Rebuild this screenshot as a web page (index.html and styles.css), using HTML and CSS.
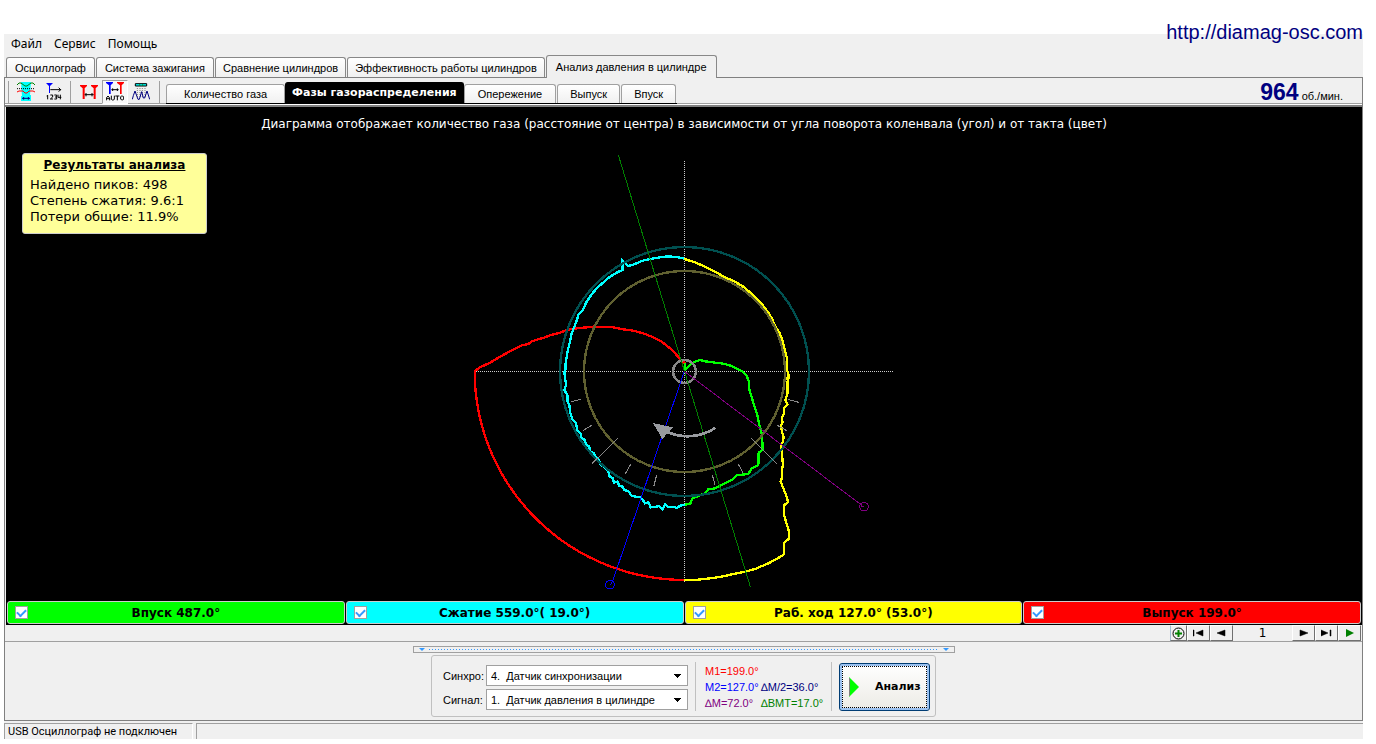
FILE: index.html
```html
<!DOCTYPE html>
<html lang="ru">
<head>
<meta charset="utf-8">
<title>Осциллограф</title>
<link rel="stylesheet" href="styles.css">
</head>
<body>
<div class="window">
  <a class="site-link" href="http://diamag-osc.com">http://diamag-osc.com</a>
  <nav class="menu">
    <button>Файл</button><button>Сервис</button><button>Помощь</button>
  </nav>
  <div class="tabs">
    <button>Осциллограф</button>
    <button>Система зажигания</button>
    <button>Сравнение цилиндров</button>
    <button>Эффективность работы цилиндров</button>
    <button class="active">Анализ давления в цилиндре</button>
  </div>
  <main class="page">
    <div class="toolbar">
      <span class="sep"></span>
      <button class="tool" aria-label="Наложение">
        <svg width="18" height="19" viewBox="0 0 54 57" fill="none" stroke-width="3">
          <path d="M12 0H42L39 39H42V57H12V42H15Z" fill="#0ff"/>
          <path d="M0 9L6 3H12L24 12H30L42 3H48L54 9" stroke="#008000"/>
          <path d="M0 20H54" stroke="#000" stroke-dasharray="3 3"/>
          <path d="M0 30L6 27H18L24 33H30L36 27H48L54 30" stroke="#f00"/>
          <path d="M15 49H39M20 45V53M34 45V53" stroke="#000080"/>
        </svg>
      </button>
      <button class="tool" aria-label="Нумерация">
        <svg width="16" height="17" viewBox="0 0 48 51" fill="none" stroke="#000" stroke-width="3">
          <path d="M0 0H21L12 9V30H9V9Z" fill="#00f" stroke="none"/>
          <path d="M13 20H45M38 14L44 20L38 26"/>
          <path d="M5 36V49M2 39H5M13 36H20V42L13 48H21M25 36H32V48H25M27 42H32M36 35V43H46M43 35V49"/>
        </svg>
      </button>
      <span class="sep"></span>
      <button class="tool" aria-label="Маркеры">
        <svg width="18" height="14" viewBox="0 0 54 42" fill="none" stroke="#000" stroke-width="3">
          <path d="M0 0H21V3L14 10V42H8V10L0 3ZM33 0H54V3L47 10V42H41V10L33 3Z" fill="#f00" stroke="none"/>
          <path d="M14 29H41M18 24V34M36 24V34"/>
        </svg>
      </button>
      <button class="tool pressed" aria-label="Авто">
        <svg width="18" height="19" viewBox="0 0 54 57" fill="none" stroke="#000" stroke-width="3">
          <path d="M0 0H21V3L14 10V36H9V10L0 3Z" fill="#00f" stroke="none"/>
          <path d="M33 0H54V3L47 10V36H42V10L33 3Z" fill="#f00" stroke="none"/>
          <path d="M16 23H38M20 19V27M34 19V27"/>
          <path d="M1 55V48L6 42L11 48V55M1 50H11M16 41V52L19 54H23L25 51V41M28 42H40M34 42V55M44 44L47 42H50L53 45V51L50 54H47L44 51Z"/>
        </svg>
      </button>
      <button class="tool" aria-label="Пики">
        <svg width="18" height="17" viewBox="0 0 54 51" fill="none" stroke-width="3">
          <path d="M10 2H44V9H10Z" fill="#0ff" stroke="#000"/>
          <path d="M23 4V8M32 4V8" stroke="#008000"/>
          <path d="M16 15V45M24 15V45M31 15V45M39 15V45" stroke="#808080" stroke-dasharray="3 3"/>
          <path d="M1 49L4 38L9 24L15 41L18 49H22L29 26L34 45H38L45 24L50 39L53 49" stroke="#000080"/>
        </svg>
      </button>
      <span class="sep"></span>
      <div class="subtabs">
        <button class="wide">Количество газа</button>
        <button class="active">Фазы газораспределения</button>
        <button class="mid">Опережение</button>
        <button>Выпуск</button>
        <button>Впуск</button>
      </div>
      <div class="rpm"><b>964</b><span>об./мин.</span></div>
    </div>

    <section class="scope">
      <p class="caption">Диаграмма отображает количество газа (расстояние от центра) в зависимости от угла поворота коленвала (угол) и от такта (цвет)</p>
      <aside class="results">
        <h2>Результаты анализа</h2>
        <p>Найдено пиков: 498</p>
        <p>Степень сжатия: 9.6:1</p>
        <p>Потери общие: 11.9%</p>
      </aside>
      <svg class="diagram" viewBox="12 0 1320 1320" fill="none" stroke-width="7" shape-rendering="crispEdges">
        <g stroke="#ccc" stroke-width="3" stroke-dasharray="3 3">
          <path d="M42 664.5H1299"/><path d="M673.5 33V1296"/>
        </g>
        <path stroke="#f00" d="M675 664V640L662 628 648 613 630 595 605 575 580 562 550 550 520 542 490 538 460 532 400 530 370 533 335 537 318 541 300 548 270 556 255 562 215 574 205 582 185 586 150 604 120 620 90 638 60 652 44 664A631 626 0 0 0 675 1290"/>
        <path stroke="#0ff" d="M673 326L655 322 628 319 605 321 575 326 548 332 525 342 505 348 497 342 487 332V360L470 368 450 380 430 397 410 415 395 433 380 455 368 480 356 492 350 512 343 530 335 550 330 575 325 595 320 620 316 645 317 655 313 668 315 680 318 705 313 720 322 735 323 755 328 765 330 785 338 810 348 820 352 840 362 850 365 865 375 870 377 882 388 890 390 903 402 910 408 922 418 932 420 943 433 952 445 965 448 978 458 985 462 998 473 995 478 1008 488 1010 492 1020 505 1023 515 1038 543 1042 555 1060 565 1057 572 1072 590 1070 598 1068 607 1078 615 1063 627 1072 638 1070 652 1074 660 1067 675 1064"/>
        <path stroke="#ff0" d="M673 327L705 337 730 348 770 368 795 382 825 395 850 410 870 427 895 452 910 468 928 492 938 510 945 528 958 548 968 572 974 600 981 625V660L987 680 979 686 986 685 982 695 983 728 976 750 982 763 973 772 972 790 965 805 968 818 963 825 966 845 971 860 969 875 962 885 965 905 967 925 969 945 965 960 967 980 962 995 970 1015 980 1040 984 1057 973 1065 971 1090 978 1115 987 1145 986 1167 973 1178 972 1213 950 1227 925 1240 885 1257 857 1265 820 1272 785 1280 750 1285 715 1289 673 1290"/>
        <path stroke="#0f0" d="M674 640V660L690 645 705 635 720 630 735 634 765 638 790 641 815 648 835 658 850 666 860 678 867 695 867 715 873 735 882 765 892 795 898 825 905 850 907 875 907 900 896 908 895 945 875 955 865 972 830 976 815 990 780 1007 765 1015 745 1018 735 1030 715 1038 698 1045 690 1062 675 1064"/>
        <circle cx="673.5" cy="664.5" r="373.5" stroke="#005050"/>
        <circle cx="673.5" cy="664.5" r="301.5" stroke="#606030"/>
        <circle cx="673.5" cy="664.5" r="34.5" stroke="#888"/>
        <g stroke-width="3">
          <path stroke="#008000" d="M475 15L871 1310"/>
          <g stroke="#00f"><path d="M673 664L459 1290L452 1304"/><circle cx="450" cy="1304" r="13"/></g>
          <g stroke="#800080"><path d="M673 664L1199 1061H1205V1070H1212"/><circle cx="1212" cy="1070" r="13"/></g>
          <path stroke="#888" d="M333 755L362 748M368 842L395 826M397 940L473 865M512 943L496 971M590 975L582 1007M983 748L1016 757M952 826L980 842M874 865L950 941M835 943L850 970M757 975L765 1005"/>
        </g>
        <path stroke="#999ba0" stroke-width="8" d="M766 834Q695 878 616 844"/>
        <path fill="#999ba0" d="M579 819L638 832 607 867Z"/>
      </svg>
      <div class="phases">
        <label class="phase green"><input type="checkbox" checked><span>Впуск 487.0°</span></label>
        <label class="phase cyan"><input type="checkbox" checked><span>Сжатие 559.0°( 19.0°)</span></label>
        <label class="phase yellow"><input type="checkbox" checked><span>Раб. ход 127.0° (53.0°)</span></label>
        <label class="phase red"><input type="checkbox" checked><span>Выпуск 199.0°</span></label>
      </div>
    </section>

    <div class="pager">
      <button class="add" aria-label="Добавить"><svg width="13" height="13" viewBox="0 0 13 13" fill="none"><circle cx="6.5" cy="6.5" r="5.5" stroke="#000"/><path d="M3 6.5H10M6.5 3V10" stroke="#008000" stroke-width="2"/></svg></button>
      <button aria-label="В начало"><svg width="11" height="8" viewBox="0 0 11 8"><path d="M0 1H1V7H0ZM10 1V7L3 4Z" stroke="#000" stroke-width=".5"/></svg></button>
      <button aria-label="Назад"><svg width="11" height="8" viewBox="0 0 11 8"><path d="M9 1V7L1 4Z" stroke="#000" stroke-width=".5"/></svg></button>
      <output>1</output>
      <button aria-label="Вперёд"><svg width="11" height="8" viewBox="0 0 11 8"><path d="M2 1V7L10 4Z" stroke="#000" stroke-width=".5"/></svg></button>
      <button aria-label="В конец"><svg width="11" height="8" viewBox="0 0 11 8"><path d="M0 1V7L7 4ZM9 1H10V7H9Z" stroke="#000" stroke-width=".5"/></svg></button>
      <button aria-label="Пуск"><svg width="11" height="8" viewBox="0 0 11 8"><path fill="#008000" d="M2 0V8L10 4Z"/></svg></button>
    </div>

    <div class="splitter"><i></i><span></span><i></i></div>

    <form class="controls">
      <div class="inputs">
        <label for="sync">Синхро:</label>
        <select id="sync"><option>4.&nbsp; Датчик синхронизации</option></select>
        <label for="signal">Сигнал:</label>
        <select id="signal"><option>1.&nbsp; Датчик давления в цилиндре</option></select>
      </div>
      <div class="marks">
        <span class="m1">M1=199.0°</span>
        <span class="m2">M2=127.0°</span><span class="half">∆M/2=36.0°</span>
        <span class="dm">∆M=72.0°</span><span class="bmt">∆ВМТ=17.0°</span>
      </div>
      <button type="button" class="analyse">
        <svg width="11" height="20" viewBox="0 0 11 20"><path d="M0 0L10 10L0 20Z" fill="#0f0"/><path d="M.5 1V19" stroke="#808080"/></svg>
        <span>Анализ</span>
      </button>
    </form>
  </main>
  <footer class="status"><span>USB Осциллограф не подключен</span><span></span></footer>
</div>
</body>
</html>
```
FILE: styles.css
```css
* { box-sizing: border-box; }
body {
  margin: 0;
  background: #fff;
  color: #000;
  font: 11px/16px "Liberation Sans", Arial, sans-serif;
}
button, select { font: inherit; color: inherit; }
button { border: 0; padding: 0; background: none; }
p, h2 { margin: 0; }
.window {
  position: relative;
  display: flex;
  flex-direction: column;
  min-height: calc(100vh - 39px);
  margin: 34px 13px 5px 4px;
  background: #f0f0f0;
}
.site-link {
  position: absolute;
  right: 0;
  top: -14px;
  font-size: 20px;
  line-height: 24px;
  color: #000080;
  text-decoration: none;
}
.menu {
  display: flex;
  gap: 12px;
  height: 21px;
  padding-left: 7px;
  font: 12px/20px "Noto Sans", "Open Sans", sans-serif;
}
.menu button { height: 19px; }
.tabs {
  display: flex;
  align-items: flex-end;
  gap: 1px;
  height: 22px;
  padding-left: 2px;
}
.tabs button {
  height: 20px;
  padding: 0 8px;
  border: 1px solid #888;
  border-bottom: 0;
  border-radius: 3px 3px 0 0;
  background: linear-gradient(#fff, #f0f0f0);
}
.tabs button:nth-child(n+3) { padding: 0 7px; }
.tabs .active:nth-child(n) {
  height: 23px;
  margin-bottom: -1px;
  padding: 0 9px;
  background: #f0f0f0;
  z-index: 1;
}
.page {
  flex: 1;
  display: flex;
  flex-direction: column;
  border: 1px solid #808080;
}
.toolbar {
  display: flex;
  align-items: center;
  height: 29px;
  padding-left: 3px;
  border-bottom: 2px solid #808080;
  box-shadow: inset 0 -1px #fff, inset 0 -2px #a0a0a0;
}
.sep { width: 1px; height: 22px; background: #a0a0a0; }
.tool {
  display: grid;
  place-items: center;
  width: 26px;
  height: 24px;
}
.tool:nth-of-type(1) { margin-left: 4px; }
.tool:nth-of-type(2) { margin: 0 3px 0 2px; }
.tool:nth-of-type(3) { margin-left: 5px; }
.tool:nth-of-type(5) { margin-right: 5px; }
.pressed {
  border: 1px solid #a0a0a0;
  border-right-color: #fff;
  border-bottom-color: #fff;
  background: #f8f8f8;
}
.subtabs {
  display: flex;
  align-items: flex-end;
  align-self: flex-start;
  height: 26px;
  margin-left: 6px;
  border-bottom: 1px solid #000;
}
.subtabs button {
  height: 19px;
  padding: 0 12px;
  margin-right: 1px;
  border: 1px solid #a0a0a0;
  border-bottom: 0;
  border-radius: 3px 3px 0 0;
  background: linear-gradient(#fff, #f0f0f0);
}
.subtabs .wide { padding: 0 17px; margin-right: 0; }
.subtabs .mid { padding: 0 13px; }
.subtabs .active {
  height: 21px;
  margin-right: 0;
  padding: 0 6px;
  border-color: #000;
  background: #000;
  color: #fff;
  font: bold 11px/16px "DejaVu Sans", Verdana, sans-serif;
}
.rpm {
  display: flex;
  align-items: baseline;
  gap: 3px;
  margin: 0 19px 0 auto;
}
.rpm b { font-size: 23px; line-height: 24px; color: #000080; }
.scope {
  position: relative;
  flex: 1;
  display: flex;
  flex-direction: column;
  margin-left: 1px;
  background: #000;
  font-family: "DejaVu Sans", Verdana, sans-serif;
}
.caption {
  padding: 8px 0;
  color: #fff;
  font-size: 12px;
  line-height: 18px;
  text-align: center;
}
.results {
  position: absolute;
  left: 16px;
  top: 46px;
  width: 185px;
  padding: 3px 7px 8px;
  border: 1px solid #ccc;
  border-radius: 3px;
  background: #ff9;
  font-size: 13px;
  line-height: 16px;
}
.results h2 {
  margin-bottom: 4px;
  font: bold 12px/16px "DejaVu Sans", Verdana, sans-serif;
  text-align: center;
  text-decoration: underline;
}
.diagram {
  flex: none;
  align-self: center;
  width: 440px;
  height: 440px;
  margin-top: 9px;
}
.phases {
  display: grid;
  grid-template-columns: repeat(4, 1fr);
  gap: 1px;
  margin-top: auto;
  padding: 0 1px 1px;
}
.phase {
  display: flex;
  align-items: center;
  height: 23px;
  border: 1px solid #ccc;
  border-radius: 3px;
  font-size: 12px;
  font-weight: bold;
}
.phase span { flex: 1; padding-right: 20px; text-align: center; }
.phase input {
  appearance: none;
  width: 13px;
  height: 13px;
  margin: 0 0 0 7px;
  border: 1px solid #a0a0a0;
  background: #fff;
  display: grid;
  place-items: center;
}
.phase input:checked::before {
  content: "";
  width: 7px;
  height: 4px;
  margin-bottom: 2px;
  border: solid #3399ff;
  border-width: 0 0 2px 2px;
  transform: rotate(-45deg);
}
.green { background: #0f0; }
.cyan { background: #0ff; }
.yellow { background: #ff0; }
.red { background: #f00; }
.pager {
  display: flex;
  justify-content: flex-end;
  height: 17px;
  padding-right: 1px;
  border-bottom: 1px solid #a0a0a0;
}
.pager button {
  display: grid;
  place-items: center;
  width: 23px;
  border: 1px solid #fff;
  border-right-color: #707070;
  border-bottom-color: #707070;
}
.pager .add { width: 17px; border-left-color: #a0bcd0; }
.pager output {
  width: 59px;
  font: 12px/16px "DejaVu Sans", Verdana, sans-serif;
  text-align: center;
}
.splitter {
  align-self: center;
  display: flex;
  align-items: center;
  gap: 4px;
  width: 542px;
  max-width: 100%;
  height: 7px;
  margin-top: 4px;
  padding: 0 5px;
  border: 1px solid #a0a0a0;
}
.splitter span { flex: 1; height: 1px; background: repeating-linear-gradient(90deg, #3399ff 0 1px, transparent 1px 3px); }
.splitter i { border: solid transparent; border-width: 3px 3px 0; border-top-color: #3399ff; }
.controls {
  align-self: center;
  display: flex;
  align-items: center;
  margin: 2px 0 3px;
  padding: 6px 5px 5px 11px;
  border: 1px solid #c0c0c0;
  border-radius: 3px;
}
.inputs {
  display: grid;
  grid-template-columns: 43px 202px;
  align-items: center;
  row-gap: 3px;
  padding-top: 2px;
}
.inputs label { white-space: nowrap; }
.inputs select {
  appearance: none;
  height: 21px;
  padding: 0 4px;
  border: 1px solid #a0a0a0;
  border-radius: 0;
  background: #fff conic-gradient(from -45deg at 50% 100%, #000 0 90deg, transparent 0) no-repeat right 5px center / 9px 4px;
}
.marks {
  display: grid;
  grid-template-columns: 56px 70px;
  align-content: center;
  height: 49px;
  margin: 0 7px;
  padding-left: 9px;
  border: solid #c0c0c0;
  border-width: 0 1px;
}
.m1 { grid-column: 1 / -1; color: #f00; }
.m2 { color: #00f; }
.half { color: #000080; }
.dm { color: #800080; }
.bmt { color: #008000; }
.analyse {
  display: flex;
  align-items: center;
  gap: 15px;
  width: 91px;
  height: 48px;
  padding-left: 9px;
  border: 1px solid #003c74;
  border-radius: 3px;
  outline: 1px dotted #000;
  outline-offset: -4px;
  background: linear-gradient(#fff, #ecebe5);
  box-shadow: inset 0 0 0 2px #9cc2f0;
  font: bold 11px/16px "DejaVu Sans", Verdana, sans-serif;
}
.status {
  display: flex;
  gap: 3px;
  height: 18px;
  padding-top: 2px;
  font: 11px/16px Roboto, Tahoma, sans-serif;
}
.status span {
  flex: 1;
  border: solid #a0a0a0;
  border-width: 1px 0 0 1px;
  padding-left: 3px;
}
.status span:first-child { flex: 0 0 189px; border-right: 1px solid #fff; white-space: nowrap; }
```
